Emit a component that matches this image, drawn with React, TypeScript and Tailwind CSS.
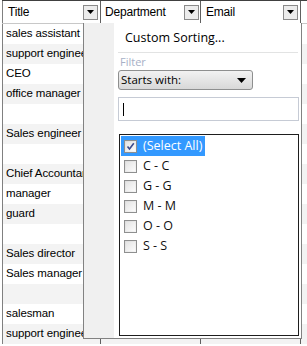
import React from "react";

const rows = [
  "sales assistant",
  "support engineer",
  "CEO",
  "office manager",
  "",
  "Sales engineer",
  "",
  "Chief Accountant",
  "manager",
  "guard",
  "",
  "Sales director",
  "Sales manager",
  "",
  "salesman",
  "support engineer",
];

function DropBtn() {
  return (
    <div className="w-[15px] h-[15px] border border-[#8a8a8a] bg-[#ececec] flex items-center justify-center">
      <svg width="7" height="4" viewBox="0 0 7 4">
        <polygon points="0,0 7,0 3.5,4" fill="#000" />
      </svg>
    </div>
  );
}

function Check({ checked }: { checked?: boolean }) {
  return (
    <div className="w-[13px] h-[13px] border border-[#8e8f8f] bg-gradient-to-br from-[#dcdcdc] to-[#f6f6f6] flex items-center justify-center">
      <div className="w-[9px] h-[9px] bg-gradient-to-br from-[#e4e4e4] to-[#fbfbfb] flex items-center justify-center">
        {checked && (
          <svg width="9" height="9" viewBox="0 0 9 9">
            <path d="M1.5 4.5 L3.5 7 L7.8 1.2" stroke="#3c4a8c" strokeWidth="1.6" fill="none" />
          </svg>
        )}
      </div>
    </div>
  );
}

export default function App() {
  return (
    <div
      className="relative w-[307px] h-[346px] overflow-hidden bg-white"
      style={{ fontFamily: '"Liberation Sans", Arial, sans-serif' }}
    >
      {/* Grid */}
      <div className="pl-[2px]">
        <div className="w-[320px] border-t border-[#404040]">
          {/* Header */}
          <div className="flex h-[23px] border-b border-[#c8c8c8] text-[12px] text-black">
            <div className="w-[99px] border-l border-[#808080] border-r border-r-[#606060] flex items-center pl-[5px] pr-[2px]">
              <span className="flex-1 tracking-[-0.2px]">Title</span>
              <DropBtn />
            </div>
            <div className="w-[100px] border-r border-[#606060] flex items-center pl-[4px] pr-[1px]">
              <span className="flex-1 tracking-[-0.2px]">Department</span>
              <DropBtn />
            </div>
            <div className="w-[100px] border-r border-[#606060] flex items-center pl-[5px] pr-[2px]">
              <span className="flex-1 tracking-[-0.2px]">Email</span>
              <DropBtn />
            </div>
            <div className="flex-1" />
          </div>
          {/* Rows */}
          {rows.map((r, i) => (
            <div
              key={i}
              className={`flex h-[20px] text-[11.5px] text-black ${i % 2 === 1 ? "bg-[#f3f3f3]" : "bg-white"}`}
            >
              <div className="w-[99px] border-l border-[#808080] border-r border-r-[#606060] flex items-center pl-[3px] whitespace-nowrap overflow-hidden tracking-[-0.1px]">
                {r}
              </div>
              <div className="w-[100px] border-r border-[#606060]" />
              <div className="w-[100px] border-r border-[#606060]" />
              <div className="flex-1" />
            </div>
          ))}
        </div>
      </div>

      {/* Popup */}
      <div
        className="absolute left-[83px] top-[23px] w-[219px] h-[316px] border-l border-b border-r border-[#828282] bg-white flex"
        style={{ fontFamily: '"Open Sans", "Noto Sans", sans-serif' }}
      >
        <div className="w-[30px] bg-[#f0f0f0] shrink-0" />
        <div className="flex-1 flex flex-col pl-[4px] pr-[2px]">
          <div className="h-[29px] flex items-center pl-[7px] text-[12.5px] text-black pt-[2px]">
            Custom Sorting...
          </div>
          <div className="h-px bg-[#e2e3e3] mr-[1px]" />
          <div className="text-[11px] text-[#a7b0c6] pl-[2px] pt-[1px] leading-[16px]">Filter</div>
          <div className="w-[135px] h-[20px] rounded-[3px] border border-[#8e8f8f] bg-gradient-to-b from-[#f2f2f2] to-[#d8d8d8] flex items-center pl-[2px] pr-[6px] text-[11.5px] text-black">
            <span className="flex-1 leading-none">Starts with:</span>
            <svg width="9" height="5" viewBox="0 0 9 5">
              <polygon points="0,0 9,0 4.5,5" fill="#000" />
            </svg>
          </div>
          <div className="mt-[7px] h-[24px] border border-[#c6cbd5] bg-white flex items-center pl-[4px]">
            <div className="w-px h-[13px] bg-black" />
          </div>
          <div className="mt-[13px] ml-[1px] h-[202px] border border-[#1e1e1e] bg-white flex flex-col pt-[1px] pl-px text-[12.5px] text-[#101010]">
            <div className="flex items-center h-[20px] w-[84px] bg-[#3399ff] text-white pl-[3px] gap-[6px]">
              <Check checked />
              <span>(Select All)</span>
            </div>
            {["C - C", "G - G", "M - M", "O - O", "S - S"].map((t) => (
              <div key={t} className="flex items-center h-[20px] pl-[3px] gap-[6px]">
                <Check />
                <span>{t}</span>
              </div>
            ))}
          </div>
        </div>
      </div>
    </div>
  );
}
